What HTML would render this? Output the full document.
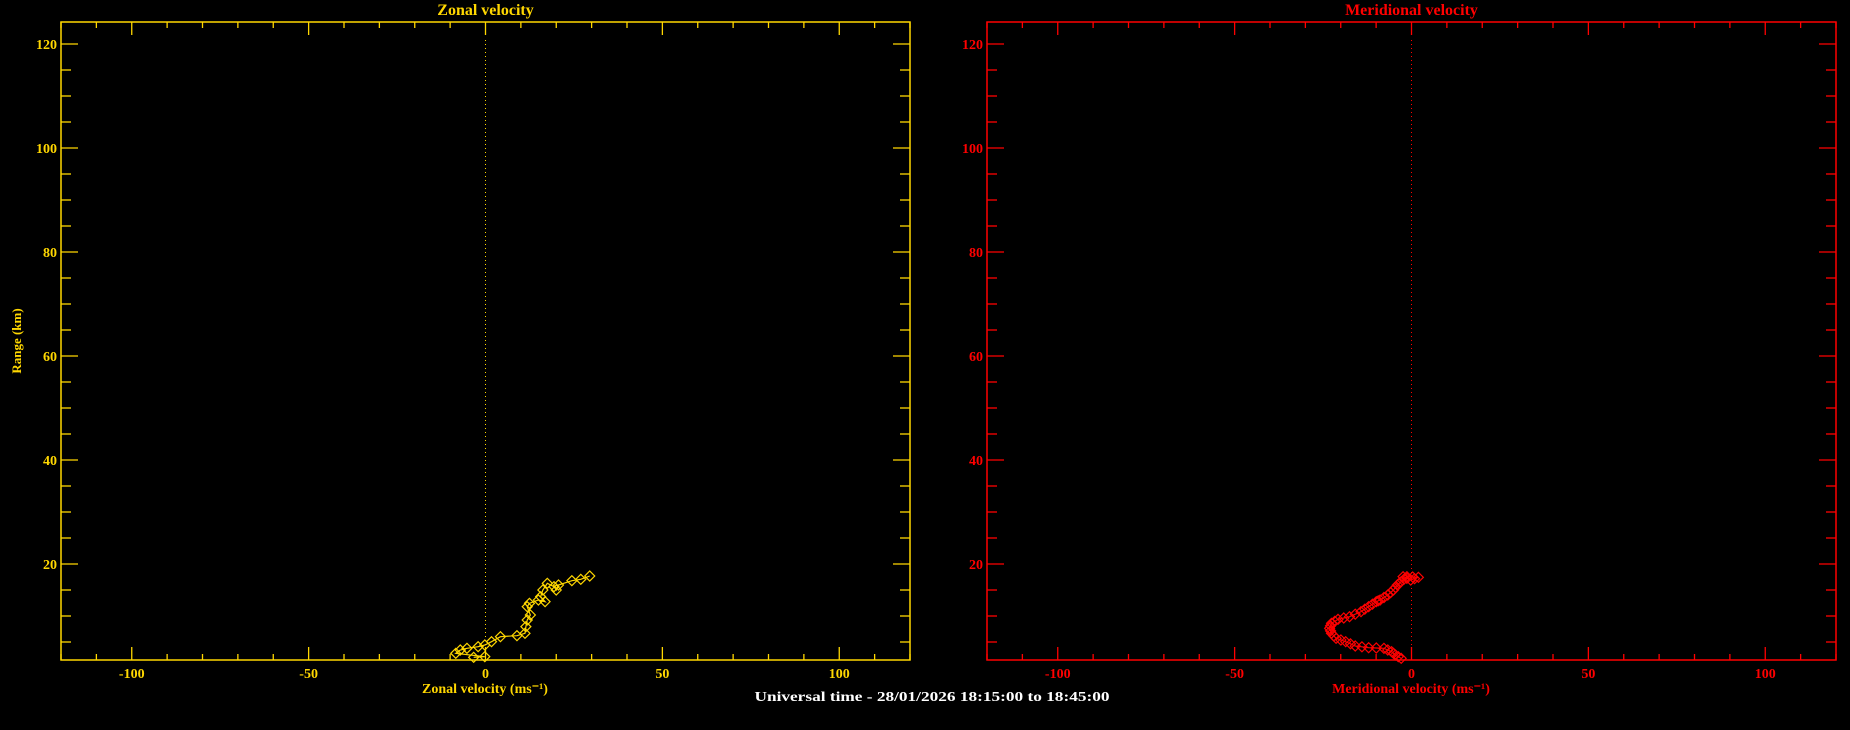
<!DOCTYPE html>
<html><head><meta charset="utf-8"><style>
html,body{margin:0;padding:0;background:#000;width:1850px;height:730px;overflow:hidden}
svg text{font-family:"Liberation Serif",serif;font-weight:bold}
</style></head><body>
<svg id="s" width="1850" height="730" xmlns="http://www.w3.org/2000/svg">
<text x="932" y="701" fill="#fff" font-size="14" text-anchor="middle" textLength="355" lengthAdjust="spacingAndGlyphs">Universal time - 28/01/2026 18:15:00 to 18:45:00</text>
</svg>
<script>
const s=document.getElementById('s');
function el(t,a,txt){const e=document.createElementNS('http://www.w3.org/2000/svg',t);for(const k in a)e.setAttribute(k,a[k]);if(txt!==undefined)e.textContent=txt;s.appendChild(e);return e;}
function plot(x0,col,title,xlabel,pts,ylab,xl){
  const x1=x0+849,y0=22,y1=660;
  const xs=v=>x0+424.5+v*3.5375, ys=v=>564-(v-20)*5.2;
  el('rect',{x:x0,y:y0,width:849,height:638,fill:'none',stroke:col,'stroke-width':1.5});
  el('text',{x:x0+424.5,y:15,fill:col,'font-size':16,'text-anchor':'middle'},title);
  for(let v=-120;v<=120;v+=10){const x=xs(v);const L=(v%50==0)?13:6;
    el('line',{x1:x,y1:y1,x2:x,y2:y1-L,stroke:col,'stroke-width':1.3});
    el('line',{x1:x,y1:y0,x2:x,y2:y0+L,stroke:col,'stroke-width':1.3});
    if(v%50==0&&Math.abs(v)<=100)el('text',{x:x,y:678,fill:col,'font-size':14,'text-anchor':'middle'},v<0?'-'+(-v):v);}
  for(let v=5;v<=120;v+=5){const y=ys(v);const L=(v%20==0)?17:10;
    el('line',{x1:x0,y1:y,x2:x0+L,y2:y,stroke:col,'stroke-width':1.3});
    el('line',{x1:x1,y1:y,x2:x1-L,y2:y,stroke:col,'stroke-width':1.3});
    if(v%20==0)el('text',{x:x0-4,y:y+5,fill:col,'font-size':14,'text-anchor':'end'},v);}
  el('line',{x1:xs(0),y1:y0+18,x2:xs(0),y2:y1,stroke:col,'stroke-width':1,'stroke-dasharray':'1,3'});
  el('text',{x:xl,y:693,fill:col,'font-size':14,'text-anchor':'middle'},xlabel);
  if(ylab){el('text',{x:21,y:341,fill:col,'font-size':13,'text-anchor':'middle',transform:'rotate(-90 21 341)'},ylab);}
  el('polyline',{points:pts.map(p=>p.join(',')).join(' '),fill:'none',stroke:col,'stroke-width':1.2});
  pts.forEach(p=>{const [x,y]=p;el('polygon',{points:`${x-5},${y} ${x},${y-5} ${x+5},${y} ${x},${y+5}`,fill:'none',stroke:col,'stroke-width':1.2});});
}
function dens(a){const r=[];for(let i=0;i<a.length-1;i++){r.push(a[i]);r.push([(a[i][0]+a[i+1][0])/2,(a[i][1]+a[i+1][1])/2]);}r.push(a[a.length-1]);return r;}
const z=[[165,352],[190,350],[125,340],[135,330],[150,325],[175,320],[190,315],[205,305],[225,290],[262,287],[280,280],[282,260],[285,240],[292,225],[285,200],[290,190],[310,180],[325,185],[315,170],[320,150],[330,130],[345,140],[350,150],[355,135],[385,122],[405,118],[425,108]].map(p=>[400+p[0]*0.4464,540+p[1]/3]);
const m=[[395,325],[380,315],[370,305],[350,295],[310,293],[275,288],[250,275],[225,265],[213,250],[208,235],[213,220],[230,208],[260,200],[290,185],[310,170],[330,155],[340,150],[360,135],[375,120],[385,105],[395,95],[410,80],[440,82],[420,90],[400,80]].map(p=>[1250+p[0]*0.3827,550+p[1]/3]);
plot(61,'#ffd700','Zonal velocity','Zonal velocity (ms\u207B\u00B9)',z,'Range (km)',485);
plot(987,'#ff0000','Meridional velocity','Meridional velocity (ms\u207B\u00B9)',dens(m),null,1411);
</script>
</body></html>
